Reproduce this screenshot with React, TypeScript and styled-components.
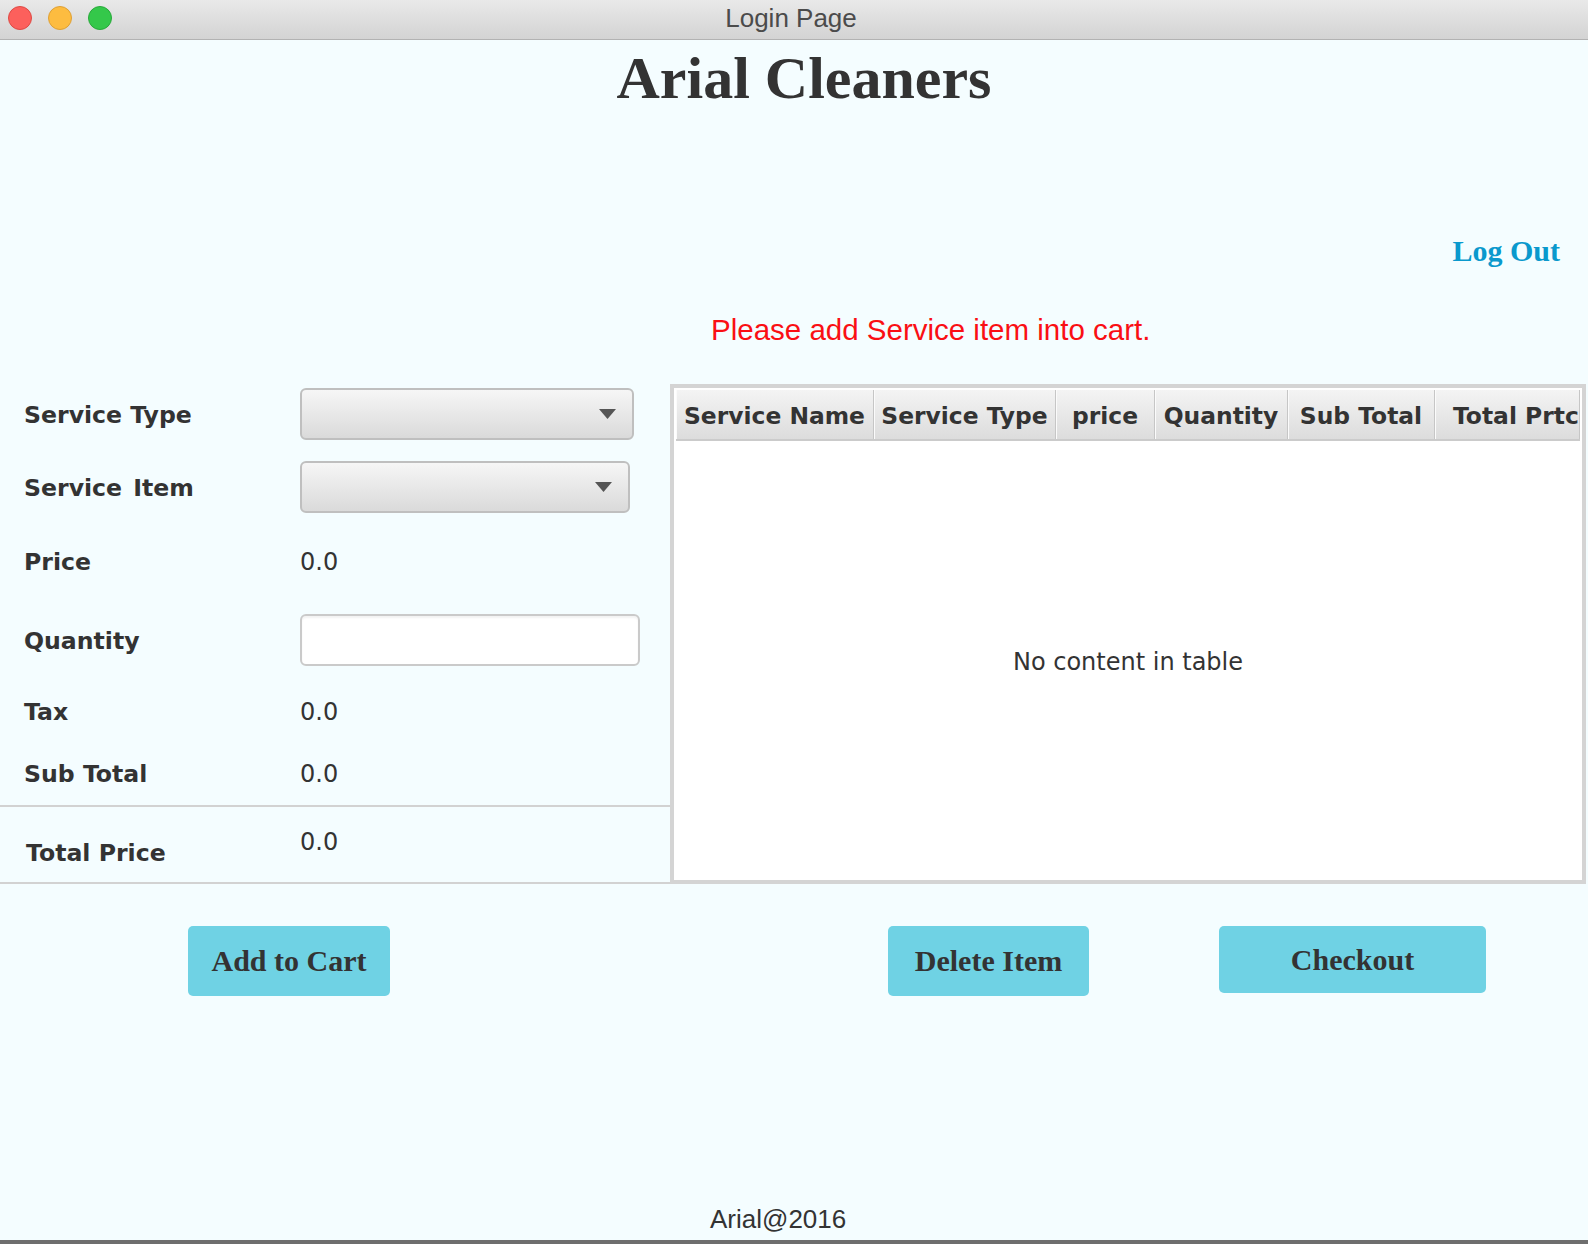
import React from "react";
import styled, { createGlobalStyle } from "styled-components";

const GlobalStyle = createGlobalStyle`
  html, body { margin: 0; padding: 0; background: #f4fdff; }
  body { width: 1588px; height: 1244px; overflow: hidden; }
  #root { width: 1588px; height: 1244px; }
  * { box-sizing: border-box; }
`;

const SANS = `"Liberation Sans", Arial, sans-serif`;
const SYS = `"DejaVu Sans", "Liberation Sans", sans-serif`;
const SERIF = `"Liberation Serif", "Times New Roman", serif`;

const Window = styled.div`
  width: 1588px;
  height: 1244px;
  display: flex;
  flex-direction: column;
  background: #f4fdff;
  color: #333;
`;

const TitleBar = styled.header`
  height: 40px;
  flex: none;
  display: grid;
  grid-template-columns: 1fr auto 1fr;
  align-items: center;
  padding: 0 8px 3px;
  background: linear-gradient(#e9e9e9, #d3d3d3);
  border-bottom: 1px solid #b2b2b2;
`;

const Lights = styled.div`
  display: flex;
  gap: 16px;
`;

const Light = styled.span<{ $bg: string; $edge: string }>`
  width: 24px;
  height: 24px;
  border-radius: 50%;
  background: ${(p) => p.$bg};
  border: 1px solid ${(p) => p.$edge};
`;

const WindowTitle = styled.div`
  font: 26px ${SANS};
  color: #4b4b4b;
  margin-left: -6px;
`;

const Heading = styled.h1`
  margin: 8px 0 0;
  padding-left: 20px;
  text-align: center;
  font: bold 60px/60px ${SERIF};
  color: #333;
`;

const LogOutRow = styled.div`
  margin-top: 128px;
  padding-right: 28px;
  text-align: right;
  font: bold 30px/30px ${SERIF};
`;

const LogOutLink = styled.a`
  color: #0a99cd;
  text-decoration: none;
`;

const Message = styled.div`
  margin-top: 49px;
  padding-left: 711px;
  font: 29.5px/30px ${SANS};
  color: #fa0f14;
`;

const Workspace = styled.section`
  margin-top: 39px;
  height: 500px;
  display: flex;
`;

const LeftPanel = styled.div`
  width: 670px;
  display: flex;
  flex-direction: column;
  padding-top: 4px;
  border-bottom: 2px solid #d2d2d2;
`;

const FieldRow = styled.div<{ $mt: number }>`
  display: grid;
  grid-template-columns: 276px 1fr;
  align-items: center;
  height: 52px;
  padding-left: 24px;
  margin-top: ${(p) => p.$mt}px;
`;

const Label = styled.div`
  font: bold 23.6px ${SYS};
  color: #333;
  white-space: nowrap;
  padding-top: 2px;
`;

const WordGap = styled.span`
  display: inline-block;
  width: 3px;
`;

const Value = styled.div`
  font: 24px ${SYS};
  color: #333;
  padding-top: 1px;
`;

const Select = styled.div<{ $w: number }>`
  width: ${(p) => p.$w}px;
  height: 52px;
  display: flex;
  align-items: center;
  justify-content: flex-end;
  padding-right: 16px;
  border: 2px solid #bfbfbf;
  border-radius: 6px;
  background: linear-gradient(#f6f6f6, #dadada);
`;

const TextInput = styled.div`
  width: 340px;
  height: 52px;
  border: 2px solid #cacaca;
  border-radius: 6px;
  background: #fff;
  box-shadow: inset 0 2px 2px rgba(0, 0, 0, 0.05);
`;

const Divider = styled.div`
  margin-top: 6px;
  height: 2px;
  background: #d2d2d2;
`;

const TotalRow = styled.div`
  display: grid;
  grid-template-columns: 274px 1fr;
  height: 75px;
  padding-left: 26px;
`;

const TotalLabel = styled(Label)`
  align-self: start;
  margin-top: 30px;
`;

const TotalValue = styled(Value)`
  align-self: start;
  margin-top: 20px;
`;

const Table = styled.div`
  width: 916px;
  height: 500px;
  display: flex;
  flex-direction: column;
  padding: 2px;
  border: 4px solid #d4d4d4;
  background: #fff;
`;

const HeaderRow = styled.div`
  display: grid;
  grid-template-columns: 198px 182px 99px 133px 147px 1fr;
  height: 51px;
  border-bottom: 2px solid #cbcbcb;
  overflow: hidden;
`;

const HeaderCell = styled.div<{ $start?: boolean }>`
  display: flex;
  align-items: center;
  justify-content: ${(p) => (p.$start ? "flex-start" : "center")};
  padding: 3px 0 0 ${(p) => (p.$start ? "18px" : "0")};
  background: linear-gradient(#f4f4f4, #dcdcdc);
  border-right: 1px solid #c6c6c6;
  box-shadow: inset 1px 0 0 #fbfbfb;
  font: bold 23.4px ${SYS};
  color: #333;
  white-space: nowrap;
  overflow: hidden;
`;

const TableBody = styled.div`
  flex: 1;
  display: flex;
  align-items: center;
  justify-content: center;
  padding-top: 4px;
  font: 24px ${SYS};
  color: #333;
`;

const ButtonRow = styled.div`
  margin-top: 42px;
  display: flex;
  align-items: flex-start;
  padding-left: 188px;
`;

const ActionButton = styled.button<{ $w: number; $h: number; $ml: number }>`
  width: ${(p) => p.$w}px;
  height: ${(p) => p.$h}px;
  margin-left: ${(p) => p.$ml}px;
  padding: 0;
  border: none;
  border-radius: 5px;
  background: #6fd2e4;
  font: bold 30px ${SERIF};
  color: #333;
`;

const Footer = styled.footer`
  margin-top: auto;
  padding: 0 0 6px 710px;
  font: 26px/30px ${SANS};
  color: #333;
  border-bottom: 4px solid #6e6e6e;
`;

const Arrow = () => (
  <svg width="17" height="10" viewBox="0 0 17 10">
    <path d="M0 0 L17 0 L8.5 10 Z" fill="#555" />
  </svg>
);

export default function App() {
  return (
    <>
      <GlobalStyle />
      <Window>
        <TitleBar>
          <Lights>
            <Light $bg="#fc605c" $edge="#de4a44" />
            <Light $bg="#fdbc40" $edge="#dea035" />
            <Light $bg="#34c84a" $edge="#28a93a" />
          </Lights>
          <WindowTitle>Login Page</WindowTitle>
          <div />
        </TitleBar>

        <Heading>Arial Cleaners</Heading>

        <LogOutRow>
          <LogOutLink href="#">Log Out</LogOutLink>
        </LogOutRow>

        <Message>Please add Service item into cart.</Message>

        <Workspace>
          <LeftPanel>
            <FieldRow $mt={0}>
              <Label>Service Type</Label>
              <Select $w={334}>
                <Arrow />
              </Select>
            </FieldRow>
            <FieldRow $mt={21}>
              <Label>
                Service
                <WordGap /> Item
              </Label>
              <Select $w={330}>
                <Arrow />
              </Select>
            </FieldRow>
            <FieldRow $mt={22}>
              <Label>Price</Label>
              <Value>0.0</Value>
            </FieldRow>
            <FieldRow $mt={27}>
              <Label>Quantity</Label>
              <TextInput />
            </FieldRow>
            <FieldRow $mt={19}>
              <Label>Tax</Label>
              <Value>0.0</Value>
            </FieldRow>
            <FieldRow $mt={10}>
              <Label>Sub Total</Label>
              <Value>0.0</Value>
            </FieldRow>
            <Divider />
            <TotalRow>
              <TotalLabel>Total Price</TotalLabel>
              <TotalValue>0.0</TotalValue>
            </TotalRow>
          </LeftPanel>

          <Table>
            <HeaderRow>
              <HeaderCell>Service Name</HeaderCell>
              <HeaderCell>Service Type</HeaderCell>
              <HeaderCell>price</HeaderCell>
              <HeaderCell>Quantity</HeaderCell>
              <HeaderCell>Sub Total</HeaderCell>
              <HeaderCell $start>Total Prtc</HeaderCell>
            </HeaderRow>
            <TableBody>No content in table</TableBody>
          </Table>
        </Workspace>

        <ButtonRow>
          <ActionButton $w={202} $h={70} $ml={0}>Add to Cart</ActionButton>
          <ActionButton $w={201} $h={70} $ml={498}>Delete Item</ActionButton>
          <ActionButton $w={267} $h={67} $ml={130}>Checkout</ActionButton>
        </ButtonRow>

        <Footer>Arial@2016</Footer>
      </Window>
    </>
  );
}
